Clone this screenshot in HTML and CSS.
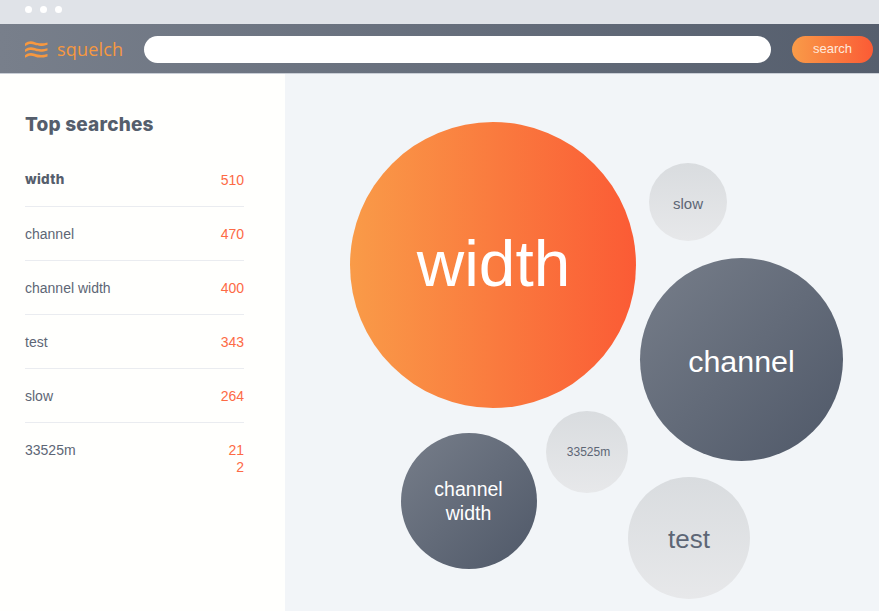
FILE: index.html
```html
<!DOCTYPE html>
<html lang="en">
<head>
    <meta charset="UTF-8">
    <meta name="viewport" content="width=device-width, initial-scale=1.0">
    <title>Squelch - Top searches</title>
    <link rel="stylesheet" href="styles.css">
</head>
<body>

    <div class="window-bar">
        <span class="dot"></span>
        <span class="dot"></span>
        <span class="dot"></span>
    </div>

    <header class="top-bar">
        <div class="logo">
            <svg class="logo-icon" width="23" height="18" viewBox="0 0 23 18" fill="#f7983f">
                <path d="M0 2.6 C3 0 6.5 -0.2 10 1.2 C13 2.4 17 3 22.5 1.4 L22.5 3.8 C17 5.6 13 5.2 9.6 3.8 C6.5 2.6 3.5 2.8 0 5.2 Z"/>
                <path d="M0 8.4 C3 5.8 6.5 5.6 10 7 C13 8.2 17 8.8 22.5 7.2 L22.5 9.6 C17 11.4 13 11 9.6 9.6 C6.5 8.4 3.5 8.6 0 11 Z"/>
                <path d="M0 14.2 C3 11.6 6.5 11.4 10 12.8 C13 14 17 14.6 22.5 13 L22.5 15.4 C17 17.2 13 16.8 9.6 15.4 C6.5 14.2 3.5 14.4 0 16.8 Z"/>
            </svg>
            <span class="logo-text">squelch</span>
        </div>
        <input class="search-input" type="text">
        <button class="search-btn" type="button">search</button>
    </header>

    <div class="content">
        <aside class="sidebar">
            <h1>Top searches</h1>
            <ul class="search-list">
                <li class="first"><span class="term">width</span><span class="count">510</span></li>
                <li><span class="term">channel</span><span class="count">470</span></li>
                <li><span class="term">channel width</span><span class="count">400</span></li>
                <li><span class="term">test</span><span class="count">343</span></li>
                <li><span class="term">slow</span><span class="count">264</span></li>
                <li><span class="term">33525m</span><span class="count">21<br>2</span></li>
            </ul>
        </aside>

        <main class="cloud">
            <div class="bubble orange b-width">width</div>
            <div class="bubble light b-slow">slow</div>
            <div class="bubble dark b-channel">channel</div>
            <div class="bubble light b-33525m">33525m</div>
            <div class="bubble dark b-channel-width">channel<br>width</div>
            <div class="bubble light b-test">test</div>
        </main>
    </div>

</body>
</html>
```

FILE: styles.css
```css
* {
    box-sizing: border-box;
}

html, body {
    height: 100%;
}

body {
    margin: 0;
    display: flex;
    flex-direction: column;
    overflow: hidden;
    font-family: "Liberation Sans", Arial, sans-serif;
    background-color: #fff;
    color: #5d6675;
}

.window-bar {
    height: 24px;
    flex: none;
    display: flex;
    gap: 8px;
    padding: 6px 0 0 25px;
    background-color: #e0e3e8;
}

.dot {
    width: 7px;
    height: 7px;
    border-radius: 50%;
    background-color: #fff;
}

.top-bar {
    height: 50px;
    flex: none;
    display: flex;
    align-items: center;
    padding: 2px 6px 0 25px;
    background: linear-gradient(90deg, #787f8b, #555e6d);
    border-bottom: 1px solid #c9ced6;
}

.logo {
    width: 119px;
    flex: none;
    display: flex;
    align-items: center;
    gap: 9px;
}

.logo-text {
    margin-bottom: 2px;
    font-family: "Open Sans", sans-serif;
    font-size: 18px;
    font-weight: 500;
    line-height: 20px;
    letter-spacing: 0.2px;
    color: #f7983f;
}

.search-input {
    width: 627px;
    height: 27px;
    flex: none;
    border: none;
    border-radius: 14px;
    background-color: #fff;
}

.search-btn {
    width: 81px;
    height: 27px;
    margin-left: 21px;
    padding: 0 0 2px;
    flex: none;
    border: none;
    border-radius: 14px;
    font-family: "Liberation Sans", Arial, sans-serif;
    font-size: 13px;
    color: #ffe9dc;
    background: linear-gradient(90deg, #f99b48, #fb5b35);
}

.content {
    flex: 1;
    display: flex;
    min-height: 0;
}

.sidebar {
    width: 285px;
    flex: none;
    padding: 39px 41px 0 25px;
    background-color: #fffffd;
}

.sidebar h1 {
    margin: 0 0 15px;
    font-family: "Inter", sans-serif;
    font-size: 19px;
    font-weight: 800;
    line-height: 24px;
    letter-spacing: 0.2px;
    color: #555e6c;
}

.search-list {
    list-style: none;
    margin: 0;
    padding: 0;
}

.search-list li {
    display: flex;
    justify-content: space-between;
    height: 54px;
    padding-top: 18px;
    font-size: 14px;
    line-height: 18px;
    border-bottom: 1px solid #eaecf0;
}

.search-list li.first {
    height: 55px;
    padding-top: 19px;
}

.search-list li:last-child {
    border-bottom: none;
}

.first .term {
    font-family: "Inter", sans-serif;
    font-weight: 800;
    font-size: 13.5px;
    line-height: 16px;
    letter-spacing: 0.3px;
    color: #555e6c;
}

.count {
    padding-top: 1px;
    color: #fd6a45;
    line-height: 17px;
    text-align: right;
}

.cloud {
    flex: 1;
    position: relative;
    background-color: #f2f5f8;
}

.bubble {
    position: absolute;
    display: flex;
    align-items: center;
    justify-content: center;
    border-radius: 50%;
    text-align: center;
}

.orange {
    color: #fff;
    background: linear-gradient(90deg, #f99b48, #fb5b35);
}

.dark {
    color: #fff;
    background: linear-gradient(135deg, #777e8a, #4f5868);
}

.light {
    color: #5d6675;
    background: linear-gradient(180deg, #d9dcdf, #e7e8ea);
}

.b-width {
    left: 64.5px;
    top: 48px;
    width: 286px;
    height: 286px;
    padding: 0 0 4px 2px;
    font-size: 65.7px;
}

.b-slow {
    left: 364px;
    top: 89px;
    width: 78px;
    height: 78px;
    padding-top: 2px;
    font-size: 15px;
}

.b-channel {
    left: 355px;
    top: 184px;
    width: 203px;
    height: 203px;
    padding-top: 3px;
    font-size: 30.4px;
}

.b-33525m {
    left: 261px;
    top: 337px;
    width: 82px;
    height: 82px;
    padding-left: 3px;
    font-size: 12px;
}

.b-channel-width {
    left: 115.5px;
    top: 359px;
    width: 136px;
    height: 136px;
    font-size: 19.5px;
    line-height: 24px;
}

.b-test {
    left: 343px;
    top: 403px;
    width: 122px;
    height: 122px;
    padding-top: 2px;
    font-size: 26px;
}
```
